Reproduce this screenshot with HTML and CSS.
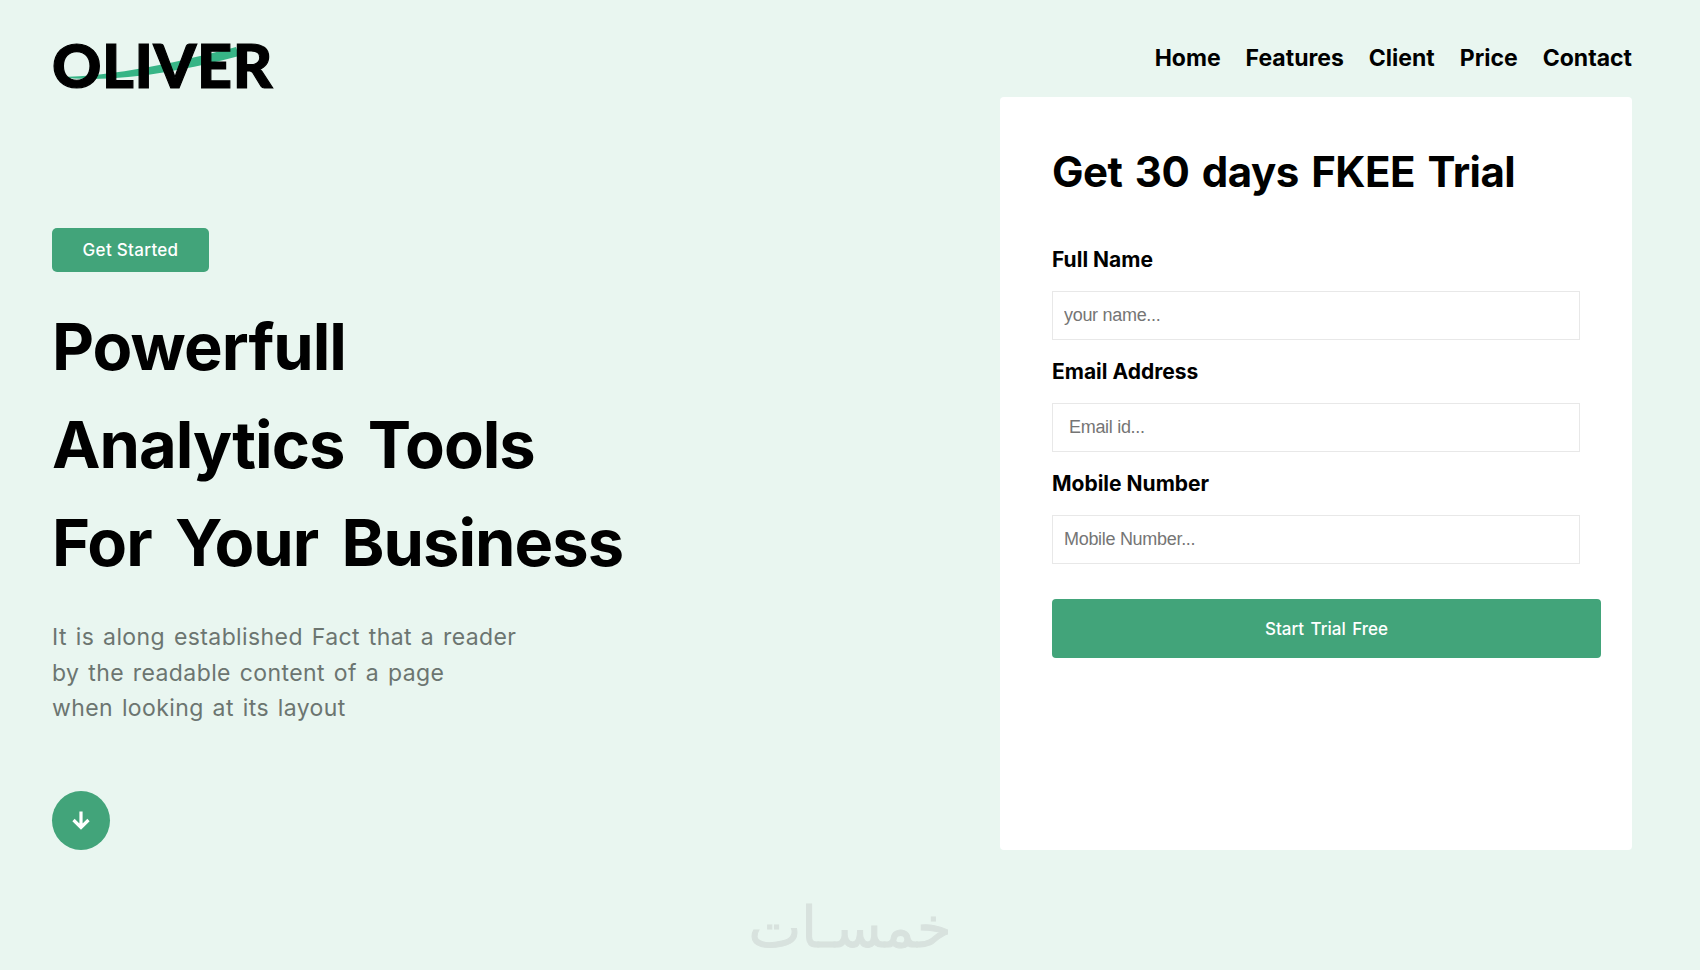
FILE: index.html
```html
<!DOCTYPE html>
<html lang="en">
<head>
<meta charset="utf-8">
<title>Oliver</title>
<link rel="stylesheet" href="styles.css">
</head>
<body>
<div class="page">
  <section class="left">
    <div class="logo">
      <svg class="swoosh" viewBox="0 0 200 40" width="200" height="40" aria-hidden="true"><path d="M5 31 C60 31 130 15 183 1 L186 10 C130 25 60 38 5 31 Z" fill="#37b586"/></svg>
      <span class="logo-text">OLIVER</span>
    </div>
    <a class="badge">Get Started</a>
    <h1 class="title">Powerfull<br>Analytics Tools<br>For Your Business</h1>
    <p class="lead">It is along established Fact that a reader<br>by the readable content of a page<br>when looking at its layout</p>
    <a class="down" aria-label="Scroll down">
      <svg viewBox="0 0 20 20" width="20" height="20"><path d="M10 1.500V17M2.500 10 10 17.500 17.500 10" fill="none" stroke="#fff" stroke-width="3.200"/></svg>
    </a>
  </section>
  <section class="right">
    <nav class="nav">
      <a>Home</a><a>Features</a><a>Client</a><a>Price</a><a>Contact</a>
    </nav>
    <form class="card">
      <h2 class="card-title">Get 30 days FKEE Trial</h2>
      <label class="label">Full Name</label>
      <input class="field" placeholder="your name...">
      <label class="label">Email Address</label>
      <input class="field field-wide" placeholder="Email id...">
      <label class="label">Mobile Number</label>
      <input class="field" placeholder="Mobile Number...">
      <button class="submit" type="button">Start Trial Free</button>
    </form>
  </section>
</div>
<div class="watermark" lang="ar" dir="rtl">خمسـات</div>
</body>
</html>
```
FILE: styles.css
```css
* { box-sizing: border-box; }
html, body { margin: 0; height: 970px; overflow: hidden; }
body { background: #e9f6f0; font-family: "Inter", "Noto Sans", sans-serif; color: #000; position: relative; }
.page { display: flex; justify-content: space-between; padding: 0 68px 0 52px; }
.left { width: 700px; padding-top: 38px; }
.logo { position: relative; width: 230px; height: 56px; }
.logo-text { position: relative; font-family: "Lato", sans-serif; font-weight: 900; font-size: 61px; line-height: 54px; letter-spacing: 0.6px; -webkit-text-stroke: 1.2px #000; }
.swoosh { position: absolute; left: 1px; top: 8px; }
.badge { display: inline-block; margin-top: 134px; width: 157px; height: 44px; line-height: 44px; text-align: center; background: #42a47a; color: #fff; border-radius: 5px; font-size: 17px; font-weight: 500; letter-spacing: 0.3px; }
.title { margin: 26px 0 0; font-size: 65px; line-height: 98px; font-weight: 700; letter-spacing: -1px; word-spacing: 9px; }
.lead { margin: 28px 0 0; font-size: 23px; line-height: 35.5px; color: #6c7570; letter-spacing: 0.4px; word-spacing: 2px; }
.down { display: flex; align-items: center; justify-content: center; margin-top: 64px; width: 58px; height: 59px; border-radius: 50%; background: #42a47a; }
.right { width: 632px; }
.nav { display: flex; justify-content: flex-end; gap: 25px; height: 97px; padding-top: 42px; font-size: 23px; font-weight: 700; line-height: 32px; }
.card { background: #fff; height: 753px; border-radius: 4px; padding: 49px 32px 0 52px; display: flex; flex-direction: column; align-items: flex-start; }
.card-title { margin: 0; font-size: 42px; line-height: 52px; font-weight: 700; letter-spacing: -0.5px; word-spacing: 3px; }
.label { font-size: 21px; font-weight: 700; line-height: 28px; }
.card-title + .label { margin-top: 48px; }
.field { width: 528px; height: 49px; margin: 17px 0 18px; border: 1px solid #e8e8e8; background: #fff; padding: 0 11px; font: 18px "Liberation Sans", sans-serif; letter-spacing: -0.3px; outline: none; }
.field::placeholder { color: #757575; }
.field-wide { padding: 0 16px; }
.submit { width: 549px; height: 59px; margin-top: 17px; border: 0; border-radius: 4px; background: #42a47a; color: #fff; font: 500 17px "Inter", sans-serif; word-spacing: 2px; }
.watermark { position: absolute; left: 747px; top: 893px; width: 206px; text-align: center; font-family: "DejaVu Sans", sans-serif; font-size: 56px; line-height: 70px; color: #d8e2de; -webkit-text-stroke: 1px #d8e2de; white-space: nowrap; }
```
